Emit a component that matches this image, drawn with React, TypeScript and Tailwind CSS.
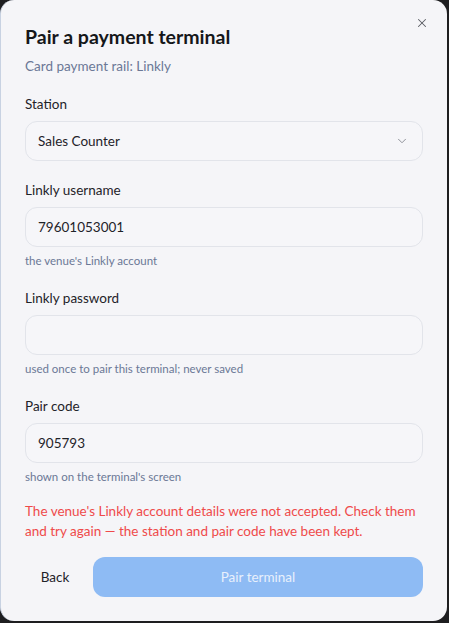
import { ChevronDown, X } from "lucide-react";

const font = { fontFamily: 'Lato, "Noto Sans", sans-serif' };

function Field({ label, value, help }: { label: string; value: string; help?: string }) {
    return (
        <div className="flex flex-col">
            <label className="text-[13.5px] leading-[20px] text-[#1f2329]">{label}</label>
            <div className="mt-[7px] h-[40px] rounded-[12px] border border-[#e2e4ea] bg-[#f6f6f9] px-[12px] flex items-center text-[13.5px] text-[#1f2329]">
                {value}
            </div>
            {help && <p className="mt-[6px] text-[11.5px] leading-[16px] text-[#6b7896]">{help}</p>}
        </div>
    );
}

export default function App() {
    return (
        <div className="min-h-screen bg-[#1e1e20]" style={font}>
            <div className="relative w-[447px] h-[621px] rounded-[14px] bg-[#f5f5f8] border-l border-[#c8d2e2] px-[24px] pt-[23px]">
                <button className="absolute right-[18px] top-[16px] text-[#5a5d63]">
                    <X className="w-[14px] h-[14px]" strokeWidth={1.75} />
                </button>

                <h1 className="text-[19.5px] leading-[28px] font-bold text-[#15171a]">Pair a payment terminal</h1>
                <p className="mt-[5px] text-[13.5px] leading-[20px] text-[#6b7896]">Card payment rail: Linkly</p>

                <div className="mt-[18px] flex flex-col gap-[19px]">
                    <div className="flex flex-col">
                        <label className="text-[13.5px] leading-[20px] text-[#1f2329]">Station</label>
                        <div className="mt-[7px] h-[40px] rounded-[12px] border border-[#e2e4ea] bg-[#f6f6f9] px-[12px] flex items-center justify-between text-[13.5px] text-[#1f2329]">
                            <span>Sales Counter</span>
                            <ChevronDown className="w-[14px] h-[14px] text-[#80848c] mr-[1px]" strokeWidth={1.5} />
                        </div>
                    </div>
                    <Field label="Linkly username" value="79601053001" help="the venue's Linkly account" />
                    <Field label="Linkly password" value="" help="used once to pair this terminal; never saved" />
                    <Field label="Pair code" value="905793" help="shown on the terminal's screen" />
                </div>

                <p className="mt-[16px] text-[13.5px] leading-[20px] text-[#ef4a4a]">
                    The venue's Linkly account details were not accepted. Check them and try again — the station and pair code have been kept.
                </p>

                <div className="mt-[16px] flex items-center gap-[8px]">
                    <button className="w-[60px] h-[40px] text-[13.5px] text-[#1f2329]">Back</button>
                    <button className="flex-1 h-[40px] rounded-[12px] bg-[#8ebbf4] text-[13.5px] text-[#e8f0fc]">Pair terminal</button>
                </div>
            </div>
        </div>
    );
}
